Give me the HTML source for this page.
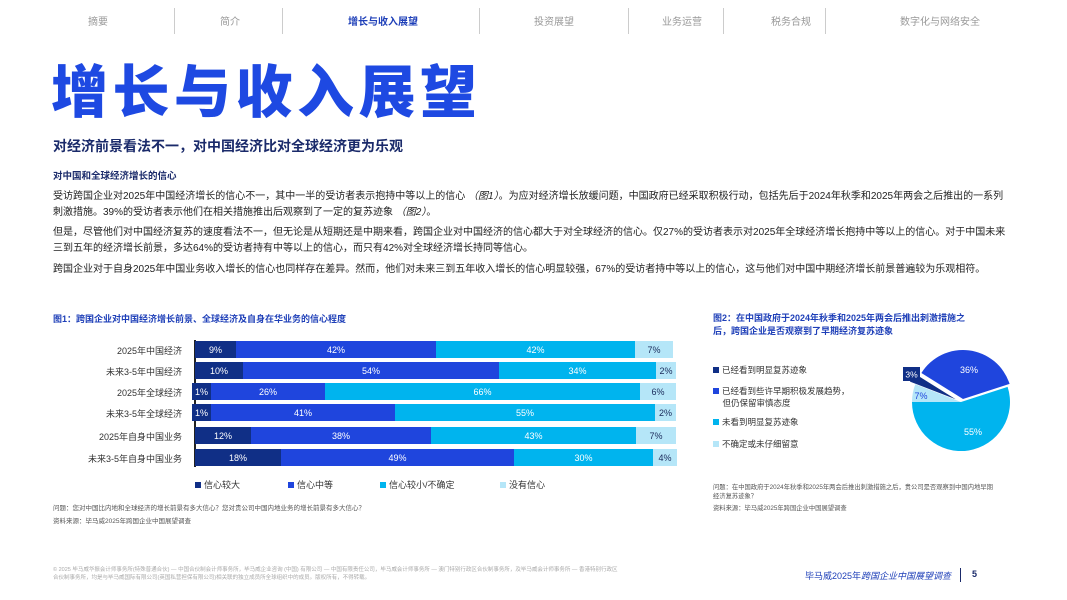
<!DOCTYPE html>
<html><head><meta charset="utf-8"><style>
*{margin:0;padding:0;box-sizing:border-box}
body{width:1067px;height:600px;background:#fff;font-family:"Liberation Sans","Noto Sans CJK SC",sans-serif;position:relative;overflow:hidden;color:#1a1a1a}
.a{position:absolute;white-space:nowrap}
.nav{font-size:10px;color:#999;top:13px}
.sep{position:absolute;top:8px;width:1px;height:26px;background:#ccc}
p.t{position:absolute;left:53px;width:1000px;font-size:10px;line-height:16px;color:#222;white-space:nowrap}
.row{position:absolute;left:195px;height:17px;display:flex;font-size:9px;color:#fff}
.row div{display:flex;align-items:center;justify-content:center;height:100%}
.lab{position:absolute;right:885px;font-size:9px;color:#333;text-align:right}
.c1{background:#102f86}.c2{background:#1f45dd}.c3{background:#00b4ee}.c4{background:#b5e6f8;color:#1a2a5a!important}
.lg{font-size:9px;color:#333;top:478px}
.sq{display:inline-block;width:6px;height:6px;margin-right:3px;vertical-align:0}
</style></head><body>
<div class="a nav" style="left:88px">摘要</div>
<div class="sep" style="left:174px"></div>
<div class="a nav" style="left:220px">简介</div>
<div class="sep" style="left:282px"></div>
<div class="a nav" style="left:348px;color:#1e3fb8;font-weight:bold">增长与收入展望</div>
<div class="sep" style="left:479px"></div>
<div class="a nav" style="left:534px">投资展望</div>
<div class="sep" style="left:628px"></div>
<div class="a nav" style="left:662px">业务运营</div>
<div class="sep" style="left:723px"></div>
<div class="a nav" style="left:771px">税务合规</div>
<div class="sep" style="left:825px"></div>
<div class="a nav" style="left:900px">数字化与网络安全</div>

<div class="a" style="left:51px;top:47px;font-size:57px;font-weight:900;color:#1e49e2;letter-spacing:4.5px">增长与收入展望</div>
<div class="a" style="left:53px;top:136px;font-size:14px;font-weight:bold;color:#1a2a6a">对经济前景看法不一，对中国经济比对全球经济更为乐观</div>
<div class="a" style="left:53px;top:168px;font-size:9.5px;font-weight:bold;color:#1a2a6a">对中国和全球经济增长的信心</div>
<p class="t" style="top:189px">受访跨国企业对2025年中国经济增长的信心不一，其中一半的受访者表示抱持中等以上的信心 <i>（图1）</i>。为应对经济增长放缓问题，中国政府已经采取积极行动，包括先后于2024年秋季和2025年两会之后推出的一系列<br>刺激措施。39%的受访者表示他们在相关措施推出后观察到了一定的复苏迹象 <i>（图2）</i>。</p>
<p class="t" style="top:225px">但是，尽管他们对中国经济复苏的速度看法不一，但无论是从短期还是中期来看，跨国企业对中国经济的信心都大于对全球经济的信心。仅27%的受访者表示对2025年全球经济增长抱持中等以上的信心。对于中国未来<br>三到五年的经济增长前景，多达64%的受访者持有中等以上的信心，而只有42%对全球经济增长持同等信心。</p>
<p class="t" style="top:262px">跨国企业对于自身2025年中国业务收入增长的信心也同样存在差异。然而，他们对未来三到五年收入增长的信心明显较强，67%的受访者持中等以上的信心，这与他们对中国中期经济增长前景普遍较为乐观相符。</p>

<div class="a" style="left:53px;top:312px;font-size:9px;font-weight:bold;color:#1e3fb8">图1：跨国企业对中国经济增长前景、全球经济及自身在华业务的信心程度</div>
<div class="a" style="left:194px;top:340px;width:1.5px;height:127px;background:#222"></div>
<div class="lab a" style="top:344px">2025年中国经济</div>
<div class="row" style="top:341px"><div class="c1" style="width:41px">9%</div><div class="c2" style="width:200px">42%</div><div class="c3" style="width:199px">42%</div><div class="c4" style="width:38px">7%</div></div>
<div class="lab a" style="top:365px">未来3-5年中国经济</div>
<div class="row" style="top:362px"><div class="c1" style="width:48px">10%</div><div class="c2" style="width:256px">54%</div><div class="c3" style="width:157px">34%</div><div class="c4" style="width:20px">2%</div></div>
<div class="lab a" style="top:386px">2025年全球经济</div>
<div class="row" style="top:383px;left:192px"><div class="c1" style="width:19px">1%</div><div class="c2" style="width:114px">26%</div><div class="c3" style="width:315px">66%</div><div class="c4" style="width:36px">6%</div></div>
<div class="lab a" style="top:407px">未来3-5年全球经济</div>
<div class="row" style="top:404px;left:192px"><div class="c1" style="width:19px">1%</div><div class="c2" style="width:184px">41%</div><div class="c3" style="width:260px">55%</div><div class="c4" style="width:21px">2%</div></div>
<div class="lab a" style="top:430px">2025年自身中国业务</div>
<div class="row" style="top:427px"><div class="c1" style="width:56px">12%</div><div class="c2" style="width:180px">38%</div><div class="c3" style="width:205px">43%</div><div class="c4" style="width:40px">7%</div></div>
<div class="lab a" style="top:452px">未来3-5年自身中国业务</div>
<div class="row" style="top:449px"><div class="c1" style="width:86px">18%</div><div class="c2" style="width:233px">49%</div><div class="c3" style="width:139px">30%</div><div class="c4" style="width:24px">4%</div></div>

<div class="a lg" style="left:195px"><span class="sq c1"></span>信心较大</div>
<div class="a lg" style="left:288px"><span class="sq c2"></span>信心中等</div>
<div class="a lg" style="left:380px"><span class="sq c3"></span>信心较小/不确定</div>
<div class="a lg" style="left:500px"><span class="sq c4"></span>没有信心</div>
<div class="a" style="left:53px;top:502px;font-size:6.5px;color:#555">问题：您对中国比内地和全球经济的增长前景有多大信心？您对贵公司中国内地业务的增长前景有多大信心？</div>
<div class="a" style="left:53px;top:515px;font-size:6.5px;color:#555">资料来源：毕马威2025年跨国企业中国展望调查</div>

<div class="a" style="left:713px;top:312px;font-size:9px;font-weight:bold;color:#1e3fb8;line-height:13px">图2：在中国政府于2024年秋季和2025年两会后推出刺激措施之<br>后，跨国企业是否观察到了早期经济复苏迹象</div>
<div class="a" style="left:713px;top:364px;font-size:8.5px;color:#333"><span class="sq c1"></span>已经看到明显复苏迹象</div>
<div class="a" style="left:713px;top:385px;font-size:8.5px;color:#333;line-height:12px"><span class="sq c2"></span>已经看到些许早期积极发展趋势，<br>&nbsp;&nbsp;&nbsp;&nbsp;但仍保留审慎态度</div>
<div class="a" style="left:713px;top:416px;font-size:8.5px;color:#333"><span class="sq c3"></span>未看到明显复苏迹象</div>
<div class="a" style="left:713px;top:438px;font-size:8.5px;color:#333"><span class="sq c4"></span>不确定或未仔细留意</div>
<svg class="a" style="left:0;top:0" width="1067" height="600">
<path d="M961,402 L912,402 A49,49 0 1 0 1007.6,386.9 Z" fill="#00b4ee"/>
<path d="M963,399 L1009.6,383.9 A49,49 0 0 0 921.4,373 Z" fill="#1f45dd"/>
<path d="M955.7,399.3 L914.1,373.3 A49,49 0 0 0 910,381.6 Z" fill="#102f86"/>
<path d="M961,402 L915.3,384.3 A49,49 0 0 0 912,402 Z" fill="#b5e6f8"/>
<rect x="903" y="367" width="17" height="14" fill="#102f86"/>
<text x="911.5" y="377.5" font-size="8.5" fill="#fff" text-anchor="middle" font-family="Liberation Sans">3%</text>
<text x="969" y="373" font-size="9" fill="#fff" text-anchor="middle" font-family="Liberation Sans">36%</text>
<text x="921" y="399" font-size="9" fill="#1f45dd" text-anchor="middle" font-family="Liberation Sans">7%</text>
<text x="973" y="435" font-size="9" fill="#fff" text-anchor="middle" font-family="Liberation Sans">55%</text>
</svg>
<div class="a" style="left:713px;top:483px;font-size:6.3px;color:#555;line-height:9px">问题：在中国政府于2024年秋季和2025年两会后推出刺激措施之后，贵公司是否观察到中国内地早期<br>经济复苏迹象？</div>
<div class="a" style="left:713px;top:503px;font-size:6.3px;color:#555">资料来源：毕马威2025年跨国企业中国展望调查</div>

<div class="a" style="left:53px;top:566px;font-size:5.5px;color:#aaa;line-height:8px">© 2025 毕马威华振会计师事务所(特殊普通合伙) — 中国合伙制会计师事务所，毕马威企业咨询 (中国) 有限公司 — 中国有限责任公司，毕马威会计师事务所 — 澳门特别行政区合伙制事务所，及毕马威会计师事务所 — 香港特别行政区<br>合伙制事务所，均是与毕马威国际有限公司(英国私营担保有限公司)相关联的独立成员所全球组织中的成员。版权所有，不得转载。</div>
<div class="a" style="left:805px;top:569px;font-size:9px;color:#1e3fb8">毕马威2025年<i>跨国企业中国展望调查</i></div>
<div class="a" style="left:960px;top:568px;width:1px;height:14px;background:#1a2a6a"></div>
<div class="a" style="left:972px;top:569px;font-size:9px;color:#1a2a6a;font-weight:bold">5</div>
</body></html>
